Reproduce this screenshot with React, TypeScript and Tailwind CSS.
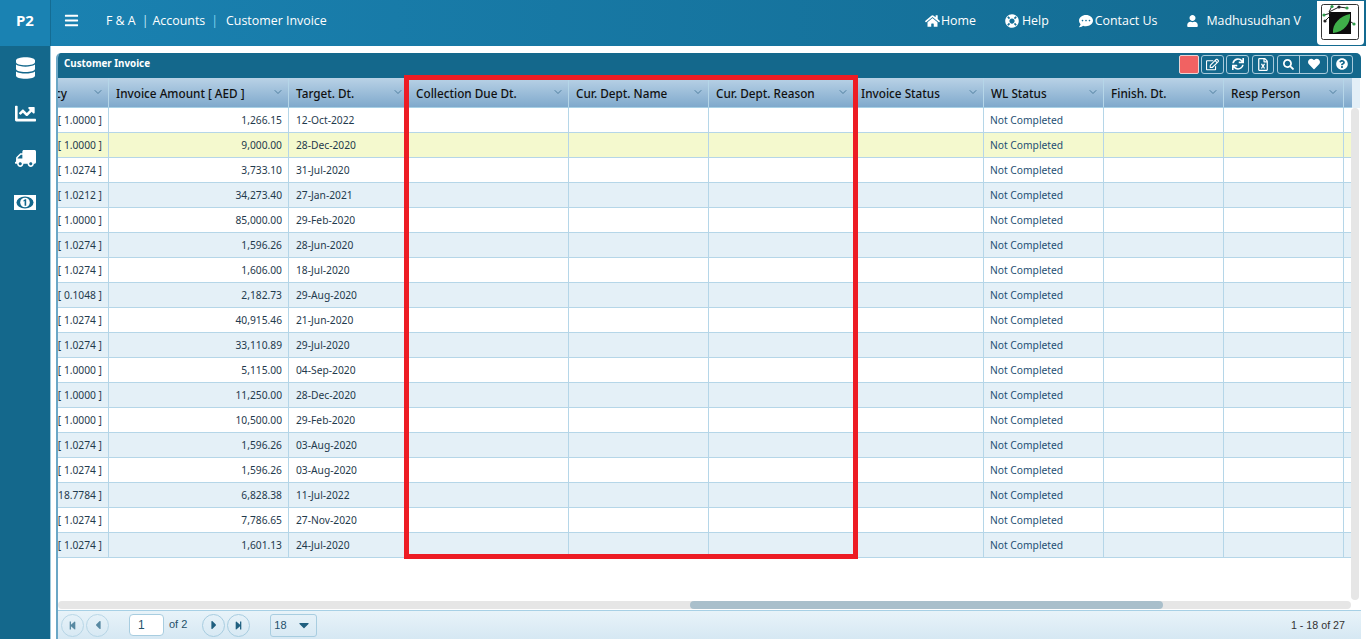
import { ChevronDown } from 'lucide-react';
import {
  FaHome, FaLifeRing, FaCommentDots, FaUser, FaDatabase, FaChartLine, FaTruck,
  FaRegEdit, FaSync, FaRegFileExcel, FaSearch, FaHeart, FaQuestionCircle,
  FaStepBackward, FaStepForward, FaCaretLeft, FaCaretRight, FaCaretDown, FaBars,
} from 'react-icons/fa';

const columns = [
  { label: 'cy' },
  { label: 'Invoice Amount [ AED ]' },
  { label: 'Target. Dt.' },
  { label: 'Collection Due Dt.' },
  { label: 'Cur. Dept. Name' },
  { label: 'Cur. Dept. Reason' },
  { label: 'Invoice Status' },
  { label: 'WL Status' },
  { label: 'Finish. Dt.' },
  { label: 'Resp Person' },
];

const rows = [
  ['1.0000', '1,266.15', '12-Oct-2022'],
  ['1.0000', '9,000.00', '28-Dec-2020'],
  ['1.0274', '3,733.10', '31-Jul-2020'],
  ['1.0212', '34,273.40', '27-Jan-2021'],
  ['1.0000', '85,000.00', '29-Feb-2020'],
  ['1.0274', '1,596.26', '28-Jun-2020'],
  ['1.0274', '1,606.00', '18-Jul-2020'],
  ['0.1048', '2,182.73', '29-Aug-2020'],
  ['1.0274', '40,915.46', '21-Jun-2020'],
  ['1.0274', '33,110.89', '29-Jul-2020'],
  ['1.0000', '5,115.00', '04-Sep-2020'],
  ['1.0000', '11,250.00', '28-Dec-2020'],
  ['1.0000', '10,500.00', '29-Feb-2020'],
  ['1.0274', '1,596.26', '03-Aug-2020'],
  ['1.0274', '1,596.26', '03-Aug-2020'],
  ['18.7784', '6,828.38', '11-Jul-2022'],
  ['1.0274', '7,786.65', '27-Nov-2020'],
  ['1.0274', '1,601.13', '24-Jul-2020'],
];

const gridCols = 'grid grid-cols-[51px_180px_120px_160px_140px_145px_130px_120px_120px_120px_8px]';
const cell = 'border-r border-[#b5d6e8] h-full flex items-center pt-[2px] overflow-hidden whitespace-nowrap';
const toolBtn = 'h-[19px] flex items-center justify-center border border-[#a9cbdc] rounded-[3px] text-white';

function Logo() {
  return (
    <div className="w-[47px] h-[44px] bg-white rounded-b-[4px] pl-[4px] pt-[3px] ml-[16px]">
      <svg width="38" height="36" viewBox="0 0 38 36">
        <rect x="0.5" y="0.5" width="37" height="35" rx="2" fill="#fff" stroke="#333" />
        <rect x="8" y="8" width="22" height="22" fill="#0c0c0c" />
        <path d="M12 29 C11 20 19 12 29 10 C30 19 23 28 12 29 Z" fill="#3fae49" />
        <path d="M3 11 L10 9 M11 2 L8 8 L18 3 L26 4 M4 17 L9 12 M30 18 L33 20" stroke="#222" fill="none" />
        <circle cx="11" cy="2.5" r="1.6" fill="#2c9c4a" />
        <circle cx="18" cy="3" r="1.6" fill="#222" />
        <circle cx="26" cy="4" r="1.6" fill="#2c9c4a" />
        <circle cx="3" cy="11" r="1.6" fill="#2c9c4a" />
        <circle cx="4" cy="17" r="1.6" fill="#222" />
        <circle cx="33" cy="20" r="1.6" fill="#2c9c4a" />
      </svg>
    </div>
  );
}

function MoneyIcon() {
  return (
    <svg width="22" height="15" viewBox="0 0 22 15" className="mt-[28px]">
      <rect width="22" height="15" fill="#fff" />
      <ellipse cx="11" cy="7.5" rx="8.5" ry="6" fill="#14688c" />
      <circle cx="11" cy="7.5" r="4.8" fill="#fff" />
      <path d="M9.4 5.4 L11 4.2 H12.2 V10.8 H10.6 V6 L9.4 6.6 Z" fill="#14688c" />
    </svg>
  );
}

function PagerBtn({ children, className = '' }: { children: React.ReactNode; className?: string }) {
  return (
    <div className={`w-[23px] h-[23px] rounded-full border border-[#a8cde0] flex items-center justify-center text-[#1f5f7f] ${className}`}>
      {children}
    </div>
  );
}

export default function App() {
  return (
    <div className="relative h-[639px] w-[1366px] overflow-hidden bg-white flex flex-col font-['Noto_Sans',sans-serif]">
      <header className="h-[46px] shrink-0 flex items-start text-white bg-gradient-to-r from-[#1a82b2] to-[#136a90] text-[12.4px]">
        <div className="w-[51px] h-full bg-[#1a82b2] border-r border-[#146c93] flex items-center justify-center font-bold text-[15px] pb-[5px]">P2</div>
        <div className="h-full flex items-center flex-1">
          <div className="flex items-center pb-[4px]">
            <FaBars className="ml-[13px] w-[15px] h-[15px]" />
            <span className="ml-[27px] font-['Open_Sans',sans-serif]">F &amp; A</span>
            <span className="ml-[6px] text-[#bfe3f3]">|</span>
            <span className="ml-[4px] font-['Open_Sans',sans-serif]">Accounts</span>
            <span className="ml-[6px] text-[#7fd0ee]">|</span>
            <span className="ml-[8px] font-['Open_Sans',sans-serif]">Customer Invoice</span>
          </div>
          <div className="ml-auto flex items-center pb-[4px] font-['Open_Sans',sans-serif]">
            <FaHome className="w-[15px] h-[14px]" />
            <span className="ml-px">Home</span>
            <FaLifeRing className="ml-[29px] w-[14px] h-[14px]" />
            <span className="ml-[3px]">Help</span>
            <FaCommentDots className="ml-[30px] w-[14px] h-[14px]" />
            <span className="ml-[2px]">Contact Us</span>
            <FaUser className="ml-[30px] w-[11px] h-[12px]" />
            <span className="ml-[8px]">Madhusudhan V</span>
          </div>
          <Logo />
          <div className="w-[2px]" />
        </div>
      </header>

      <div className="flex-1 flex min-h-0">
        <aside className="w-[51px] shrink-0 bg-[#14688c] border-r border-[#9cc8dc] text-white flex flex-col items-center pt-[11px]">
          <FaDatabase className="w-[19px] h-[22px]" />
          <FaChartLine className="w-[23px] h-[21px] mt-[24px]" />
          <FaTruck className="w-[21px] h-[17px] mt-[26px] -scale-x-100" />
          <MoneyIcon />
        </aside>

        <main className="flex-1 min-w-0 pl-[5px] pr-[5px] pt-[7px]">
          <section className="relative h-[586px] rounded-t-[5px] border-l-2 border-[#6ba7c6] overflow-hidden flex flex-col">
            <div className="h-[25px] shrink-0 bg-[#14688c] flex items-center text-white relative -ml-[2px] pl-[8px] pr-[8px]">
              <span className="font-bold text-[9.8px] -mt-[3px]">Customer Invoice</span>
              <div className="ml-auto flex items-center -mt-[3px]">
                <div className="w-[20px] h-[19px] bg-[#f16262] border border-[#e8d4d4] rounded-[2px] mr-[2px]" />
                <div className={`${toolBtn} w-[23px]`}><FaRegEdit className="w-[13px] h-[13px]" /></div>
                <div className={`${toolBtn} w-[23px] ml-[2px]`}><FaSync className="w-[12px] h-[12px]" /></div>
                <div className={`${toolBtn} w-[22px] ml-[3px]`}><FaRegFileExcel className="w-[12px] h-[13px]" /></div>
                <div className={`${toolBtn} w-[51px] ml-[3px]`}>
                  <div className="w-[22px] h-full flex items-center justify-center border-r border-[#a9cbdc]"><FaSearch className="w-[11px] h-[11px]" /></div>
                  <div className="flex-1 flex items-center justify-center"><FaHeart className="w-[12px] h-[12px]" /></div>
                </div>
                <div className={`${toolBtn} w-[22px] ml-[3px]`}><FaQuestionCircle className="w-[12px] h-[12px]" /></div>
              </div>
            </div>

            <div className={`${gridCols} h-[30px] shrink-0 bg-gradient-to-b from-[#b9d2e6] to-[#7fa9cc] border-b border-[#a7d0e5] text-[11.75px] font-medium text-[#111] w-[1294px]`}>
              {columns.map((col, i) => (
                <div key={col.label} className="border-r border-[#b5d6e8] h-full flex items-center pt-[2px] pl-[7px] relative overflow-hidden">
                  <span className={i === 0 ? 'ml-[-10px]' : ''}>{col.label}</span>
                  <ChevronDown className="absolute right-[4px] top-[8px] w-[12px] h-[12px] text-[#4f7f9f]" />
                </div>
              ))}
              <div />
            </div>

            <div className="w-[1294px] text-[10.25px] text-[#1f3a4d]">
              {rows.map((row, i) => (
                <div
                  key={i}
                  className={`${gridCols} h-[25px] border-b border-[#b5d6e8] ${i === 1 ? 'bg-[#f4f9ce]' : i % 2 === 1 ? 'bg-[#e4f0f7]' : 'bg-white'}`}
                >
                  <div className={`${cell} justify-end pr-[6px]`}><span className="shrink-0">[ {row[0]} ]</span></div>
                  <div className={`${cell} justify-end pr-[6px]`}>{row[1]}</div>
                  <div className={`${cell} pl-[7px]`}>{row[2]}</div>
                  <div className={cell} />
                  <div className={cell} />
                  <div className={cell} />
                  <div className={cell} />
                  <div className={`${cell} pl-[6px] text-[#1d4f73]`}>Not Completed</div>
                  <div className={cell} />
                  <div className={cell} />
                  <div />
                </div>
              ))}
            </div>

            <div className="flex-1" />

            <div className="h-[8px] shrink-0 w-[1293px] rounded-full bg-[#e6e6e6] mb-px">
              <div className="ml-[632px] w-[473px] h-full rounded-full bg-[#a9bfcb]" />
            </div>

            <footer className="h-[29px] shrink-0 border-t border-[#a7d0e5] bg-gradient-to-b from-[#e8f3f9] to-[#d6e8f3] flex items-center pl-[3px] pr-[16px] font-['Liberation_Sans',sans-serif] text-[11px] text-[#24506a]">
              <PagerBtn className="opacity-70"><FaStepBackward className="w-[9px] h-[9px]" /></PagerBtn>
              <PagerBtn className="ml-[2px] opacity-70"><FaCaretLeft className="w-[14px] h-[14px]" /></PagerBtn>
              <div className="ml-[20px] w-[35px] h-[22px] bg-white border border-[#a8cde0] rounded-[4px] flex items-center pl-[8px] text-[12px]">1</div>
              <span className="ml-[5px] -mt-[2px]">of 2</span>
              <PagerBtn className="ml-[15px]"><FaCaretRight className="w-[14px] h-[14px]" /></PagerBtn>
              <PagerBtn className="ml-[2px]"><FaStepForward className="w-[9px] h-[9px]" /></PagerBtn>
              <div className="ml-[20px] w-[47px] h-[23px] border border-[#a8cde0] rounded-[3px] flex items-center justify-between pl-[3px] pr-[4px]">
                18
                <FaCaretDown className="w-[16px] h-[16px] text-[#1f5f7f]" />
              </div>
              <span className="ml-auto text-[10.7px] text-[#333]">1 - 18 of 27</span>
            </footer>

            <div className="absolute left-[1293px] top-[55px] w-[8px] h-[492px] rounded-full bg-[#e6e6e6]" />
            <div className="absolute left-[1294px] top-[25px] w-[8px] h-[30px] bg-[#e3eff7]" />
          </section>
        </main>
      </div>

      <div className="absolute left-[404px] top-[75px] w-[454px] h-[484px] border-[5px] border-[#ed1c24] pointer-events-none" />
    </div>
  );
}
